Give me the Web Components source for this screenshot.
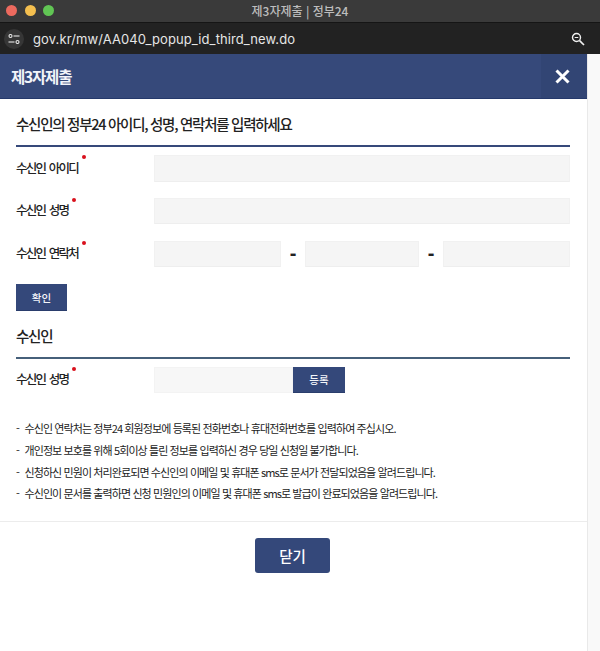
<!DOCTYPE html>
<html lang="ko">
<head>
<meta charset="utf-8">
<title>제3자제출 | 정부24</title>
<style>
  html, body { margin: 0; padding: 0; background: #fff; }
  body { width: 600px; height: 651px; overflow: hidden; font-family: "Noto Sans CJK KR", "Noto Sans", sans-serif; }
</style>
</head>
<body>
<mac-window window-title="제3자제출 | 정부24" url="gov.kr/mw/AA040_popup_id_third_new.do"></mac-window>
<popup-shell popup-title="제3자제출">
  <section-title>수신인의 정부24 아이디, 성명, 연락처를 입력하세요</section-title>
  <form-row label="수신인 아이디" style="margin-top:8px;height:27px"><text-box style="height:27px"></text-box></form-row>
  <form-row label="수신인 성명" style="margin-top:16px"><text-box></text-box></form-row>
  <form-row label="수신인 연락처" style="margin-top:17px"><phone-box></phone-box></form-row>
  <navy-button style="margin-top:17px;width:51px;height:27px">확인</navy-button>
  <section-title style="margin-top:15px" tight>수신인</section-title>
  <form-row label="수신인 성명" style="margin-top:8px">
    <div style="display:flex;width:191px"><text-box style="flex:1;background:#f7f7f7;border-color:#f3f3f3"></text-box><navy-button style="width:52px;height:26px">등록</navy-button></div>
  </form-row>
  <note-list style="margin-top:25px">
    <li>수신인 연락처는 정부24 회원정보에 등록된 전화번호나 휴대전화번호를 입력하여 주십시오.</li>
    <li>개인정보 보호를 위해 5회이상 틀린 정보를 입력하신 경우 당일 신청일 불가합니다.</li>
    <li>신청하신 민원이 처리완료되면 수신인의 이메일 및 휴대폰 sms로 문서가 전달되었음을 알려드립니다.</li>
    <li>수신인이 문서를 출력하면 신청 민원인의 이메일 및 휴대폰 sms로 발급이 완료되었음을 알려드립니다.</li>
  </note-list>
</popup-shell>

<script>
class MacWindow extends HTMLElement {
  connectedCallback() {
    const root = this.attachShadow({ mode: 'open' });
    root.innerHTML = `
      <style>
        :host { display: block; }
        #title { height: 22px; background: #3a3a3a; border-bottom: 1px solid #151515; display: flex; align-items: center; position: relative; }
        .dot { width: 11px; height: 11px; border-radius: 50%; position: absolute; top: 5px; }
        #text { width: 100%; text-align: center; color: #bdbdbd; font-size: 12px; font-weight: 500; line-height: 20px; }
        #url { height: 31px; background: #222222; display: flex; align-items: center; padding: 0 14px 0 4px; }
        #tune { width: 20px; height: 20px; border-radius: 50%; background: #363636; display: flex; align-items: center; justify-content: center; }
        #addr { flex: 1; margin-left: 9px; color: #e6e6e6; font: 13px "Inter", "Liberation Sans", sans-serif; letter-spacing: 0.1px; }
      </style>
      <div id="title">
        <span class="dot" style="left:6px;background:#ed6a5e"></span>
        <span class="dot" style="left:25px;background:#f4bf4f"></span>
        <span class="dot" style="left:43px;background:#61c554"></span>
        <div id="text">${this.getAttribute('window-title')}</div>
      </div>
      <div id="url">
        <div id="tune">
          <svg width="12" height="10" viewBox="0 0 12 10" fill="none" stroke="#e8e8e8" stroke-width="1.1">
            <circle cx="2.5" cy="2" r="1.5"/><path d="M5.5 2H11.5"/>
            <circle cx="9.5" cy="8" r="1.5"/><path d="M0.5 8H6.5"/>
          </svg>
        </div>
        <div id="addr">${this.getAttribute('url')}</div>
        <svg width="14" height="14" viewBox="0 0 14 14" fill="none" stroke="#f0f0f0" style="margin-right:1px">
          <circle cx="5.5" cy="5.5" r="4" stroke-width="1.4"/><path d="M3.7 5.5H7.3" stroke-width="1"/><path d="M8.6 8.6L13 13" stroke-width="1.7"/>
        </svg>
      </div>`;
  }
}

class PopupShell extends HTMLElement {
  connectedCallback() {
    const root = this.attachShadow({ mode: 'open' });
    root.innerHTML = `
      <style>
        :host { display: flex; width: 600px; height: 597px; background: #fff; }
        #page { width: 587px; flex: none; }
        #sidebar { flex: 1; background: #f9f9f9; border-left: 1px solid #e9e9e9; }
        header { height: 44px; background: #36497a; border-bottom: 1px solid #25396b; display: flex; align-items: center; justify-content: space-between; }
        h1 { margin: 0 0 0 11px; color: #f2f4f9; font-size: 15.5px; font-weight: 700; letter-spacing: -1.2px; }
        #x { width: 46px; height: 44px; box-sizing: border-box; padding-right: 4px; background: #324574; display: flex; align-items: center; justify-content: center; }
        main { height: 422px; padding: 0 17px 0 16px; border-bottom: 1px solid #ececec; box-sizing: content-box; }
        footer { display: flex; justify-content: center; padding-top: 16px; padding-right: 2px; }
        #close { width: 75px; height: 35px; padding-bottom: 1px; box-sizing: border-box; background: #34487a; border-radius: 3px; color: #fff; font-size: 14.5px; font-weight: 500; display: flex; align-items: center; justify-content: center; }
      </style>
      <div id="page">
        <header>
          <h1>${this.getAttribute('popup-title')}</h1>
          <div id="x">
            <svg width="15" height="15" viewBox="0 0 15 15"><path d="M1.5 1.5L13.5 13.5M13.5 1.5L1.5 13.5" stroke="#fff" stroke-width="3"/></svg>
          </div>
        </header>
        <main><slot></slot></main>
        <footer><div id="close">닫기</div></footer>
      </div>
      <div id="sidebar"></div>`;
  }
}

class SectionTitle extends HTMLElement {
  connectedCallback() {
    const root = this.attachShadow({ mode: 'open' });
    const tight = this.hasAttribute('tight');
    root.innerHTML = `
      <style>
        :host { display: block; height: ${tight ? 33 : 48}px; box-sizing: border-box; padding-top: ${tight ? 0 : 15}px; border-bottom: 2px solid ${tight ? '#46607a' : '#36497a'}; color: #222; font-size: 14.5px; font-weight: 500; line-height: 20px; letter-spacing: -1.27px; }
      </style>
      <slot></slot>`;
  }
}

class FormRow extends HTMLElement {
  connectedCallback() {
    const root = this.attachShadow({ mode: 'open' });
    root.innerHTML = `
      <style>
        :host { display: flex; align-items: center; min-height: 26px; color: #222; }
        #label { width: 138px; flex: none; font-size: 12.5px; font-weight: 500; letter-spacing: -1.7px; word-spacing: 1.5px; line-height: 18px; padding-bottom: 2px; }
        #label span { position: relative; }
        #label i { position: absolute; right: -8px; top: -2.5px; width: 4px; height: 4px; border-radius: 50%; background: #d9101c; }
        #field { flex: 1; }
      </style>
      <div id="label"><span>${this.getAttribute('label')}<i></i></span></div>
      <div id="field"><slot></slot></div>`;
  }
}

class TextBox extends HTMLElement {
  connectedCallback() {
    const root = this.attachShadow({ mode: 'open' });
    root.innerHTML = `
      <style>
        :host { display: block; height: 26px; box-sizing: border-box; background: #f5f5f5; border: 1px solid #f1f1f1; border-bottom-color: #eeeeee; }
      </style>`;
  }
}

class PhoneBox extends HTMLElement {
  connectedCallback() {
    const root = this.attachShadow({ mode: 'open' });
    root.innerHTML = `
      <style>
        :host { display: flex; align-items: center; }
        text-box:nth-of-type(1) { width: 127px; }
        text-box:nth-of-type(2) { width: 114px; }
        text-box:nth-of-type(3) { width: 127px; }
        b { width: 24px; text-align: center; color: #222; font: 700 20px/20px "Liberation Sans", sans-serif; padding-bottom: 3px; }
      </style>
      <text-box></text-box><b>-</b><text-box></text-box><b>-</b><text-box></text-box>`;
  }
}

class NavyButton extends HTMLElement {
  connectedCallback() {
    const root = this.attachShadow({ mode: 'open' });
    root.innerHTML = `
      <style>
        :host { display: flex; align-items: center; justify-content: center; flex: none; box-sizing: border-box; background: #34487a; border-bottom: 1px solid #2a3d6c; color: #f4f6fa; font-size: 10.5px; font-weight: 500; }
      </style>
      <slot></slot>`;
  }
}

class NoteList extends HTMLElement {
  connectedCallback() {
    const root = this.attachShadow({ mode: 'open' });
    root.innerHTML = `
      <style>
        :host { display: block; color: #222; font-size: 11px; letter-spacing: -0.9px; }
        ::slotted(li) { list-style: none; line-height: 21.8px; white-space: nowrap; }
        ::slotted(li)::before { content: "-"; margin-right: 5.5px; }
      </style>
      <slot></slot>`;
  }
}

customElements.define('mac-window', MacWindow);
customElements.define('popup-shell', PopupShell);
customElements.define('section-title', SectionTitle);
customElements.define('form-row', FormRow);
customElements.define('text-box', TextBox);
customElements.define('phone-box', PhoneBox);
customElements.define('navy-button', NavyButton);
customElements.define('note-list', NoteList);
</script>
</body>
</html>
